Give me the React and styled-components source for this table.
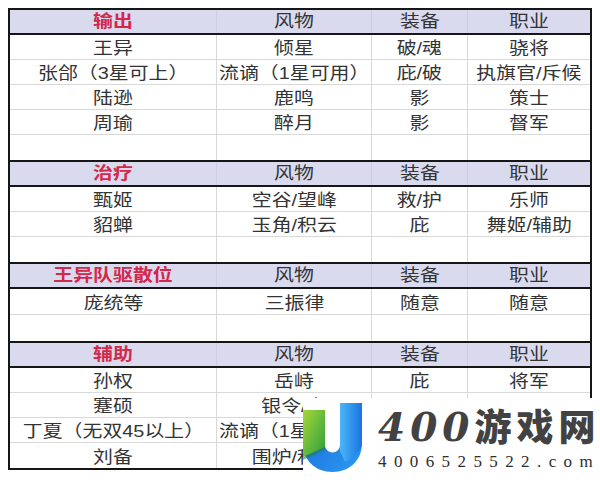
import React from "react";
import styled, { createGlobalStyle } from "styled-components";

const Global = createGlobalStyle`
  html, body { margin: 0; padding: 0; background: #fff; }
  body { font-family: "Liberation Sans", "Noto Sans CJK SC", sans-serif; }
`;

const Page = styled.div`
  position: relative;
  width: 600px;
  height: 482px;
  overflow: hidden;
  padding: 8px 0 0 8px;
  box-sizing: border-box;
  background: #fff;
`;

const Table = styled.div`
  width: 584px;
  box-sizing: border-box;
  border: 2px solid #161616;
  background: #fff;
`;

const Section = styled.section`
  & + & {
    border-top: 2px solid #161616;
  }
`;

const Row = styled.div`
  display: grid;
  grid-template-columns: 207px 155px 96px 122px;
  box-sizing: border-box;
  height: ${(p) => p.$h}px;
  background: ${(p) => (p.$head ? "#dadaef" : "#fff")};
  border-bottom: ${(p) =>
    p.$head ? "2px solid #161616" : p.$last ? "none" : "1px solid #d9d9d9"};
`;

const Cell = styled.div`
  display: flex;
  align-items: center;
  justify-content: center;
  box-sizing: border-box;
  padding-top: ${(p) => (p.$head ? "0" : "3px")};
  border-right: ${(p) => (p.$end ? "none" : p.$head ? "1px solid #cfcfe2" : "1px solid #d9d9d9")};
  overflow: visible;
  white-space: nowrap;
`;

const Text = styled.span`
  display: inline-block;
  font-family: "Liberation Sans", "Noto Sans CJK SC", sans-serif;
  font-size: 17px;
  line-height: 1;
  color: ${(p) => (p.$red ? "#d3284a" : "#333333")};
  font-weight: ${(p) => (p.$red ? 700 : 400)};
  transform: scaleX(1.17);
`;

const Watermark = styled.div`
  position: absolute;
  left: 303px;
  top: 398px;
  right: 0;
  bottom: 0;
  background: #fff;
  display: flex;
  align-items: flex-start;
  gap: 15px;
`;

const Logo = styled.svg`
  margin-top: 3px;
  flex: none;
`;

const Brand = styled.div`
  display: flex;
  flex-direction: column;
  padding-top: 9px;
`;

const BrandName = styled.div`
  display: flex;
  align-items: baseline;
  color: #424242;
  line-height: 1;
  white-space: nowrap;
`;

const Digits = styled.span`
  font-family: "DejaVu Serif", serif;
  font-style: italic;
  font-weight: 700;
  font-size: 39px;
  letter-spacing: 5px;
`;

const Hanzi = styled.span`
  font-family: "Noto Sans CJK SC", sans-serif;
  font-weight: 900;
  font-size: 37px;
  letter-spacing: 5px;
`;

const Url = styled.div`
  margin-top: 6px;
  font-family: "Liberation Serif", serif;
  font-size: 17px;
  letter-spacing: 7.4px;
  color: #2e2e2e;
  line-height: 1;
  white-space: nowrap;
`;

const sections = [
  {
    head: ["输出", "风物", "装备", "职业"],
    rows: [
      ["王异", "倾星", "破/魂", "骁将"],
      ["张郃（3星可上）", "流谪（1星可用）", "庇/破", "执旗官/斥候"],
      ["陆逊", "鹿鸣", "影", "策士"],
      ["周瑜", "醉月", "影", "督军"],
      ["", "", "", ""],
    ],
  },
  {
    head: ["治疗", "风物", "装备", "职业"],
    rows: [
      ["甄姬", "空谷/望峰", "救/护", "乐师"],
      ["貂蝉", "玉角/积云", "庇", "舞姬/辅助"],
      ["", "", "", ""],
    ],
  },
  {
    head: ["王异队驱散位", "风物", "装备", "职业"],
    rowH: 26,
    rows: [
      ["庞统等", "三振律", "随意", "随意"],
      ["", "", "", ""],
    ],
  },
  {
    head: ["辅助", "风物", "装备", "职业"],
    rows: [
      ["孙权", "岳峙", "庇", "将军"],
      ["蹇硕", "银令/定", "", ""],
      ["丁夏（无双45以上）", "流谪（1星可用）", "", ""],
      ["刘备", "围炉/积云", "", ""],
    ],
  },
];

function UMark() {
  return (
    <Logo width="60" height="72" viewBox="0 0 60 72">
      <defs>
        <linearGradient id="gU" x1="0" y1="0" x2="1" y2="1">
          <stop offset="0" stopColor="#1a62d6" />
          <stop offset="1" stopColor="#2a9cf2" />
        </linearGradient>
        <linearGradient id="gR" x1="0" y1="0" x2="1" y2="0">
          <stop offset="0" stopColor="#4cb6f7" />
          <stop offset="1" stopColor="#1a74e2" />
        </linearGradient>
        <linearGradient id="gG" x1="0" y1="0" x2="1" y2="1">
          <stop offset="0" stopColor="#a6d83a" />
          <stop offset="1" stopColor="#2c9d3c" />
        </linearGradient>
      </defs>
      <path
        d="M0 9 L22 9 L22 44 A7.5 7.5 0 0 0 37 44 L37 2 L59 2 L59 42 C59 60 46 71 29.5 71 C13 71 0 60 0 42 Z"
        fill="url(#gU)"
      />
      <path d="M37 2 L59 2 L59 44 C56 52 50 58 42 61 L37 50 Z" fill="url(#gR)" />
      <path d="M0 9 L22 9 L22 46 L0 56 Z" fill="url(#gG)" />
      <path d="M0 56 L22 46 L22 49 L0 59 Z" fill="#1f7f3a" opacity="0.55" />
    </Logo>
  );
}

export default function App() {
  return (
    <Page>
      <Global />
      <Table>
        {sections.map((s, si) => (
          <Section key={si}>
            <Row $head $h={25}>
              {s.head.map((h, i) => (
                <Cell key={i} $head $end={i === 3}>
                  <Text $red={i === 0}>{h}</Text>
                </Cell>
              ))}
            </Row>
            {s.rows.map((r, ri) => (
              <Row key={ri} $h={s.rowH || 25} $last={ri === s.rows.length - 1}>
                {r.map((c, ci) => (
                  <Cell key={ci} $end={ci === 3}>
                    <Text>{c}</Text>
                  </Cell>
                ))}
              </Row>
            ))}
          </Section>
        ))}
      </Table>
      <Watermark>
        <UMark />
        <Brand>
          <BrandName>
            <Digits>400</Digits>
            <Hanzi>游戏网</Hanzi>
          </BrandName>
          <Url>4006525522.com</Url>
        </Brand>
      </Watermark>
    </Page>
  );
}
